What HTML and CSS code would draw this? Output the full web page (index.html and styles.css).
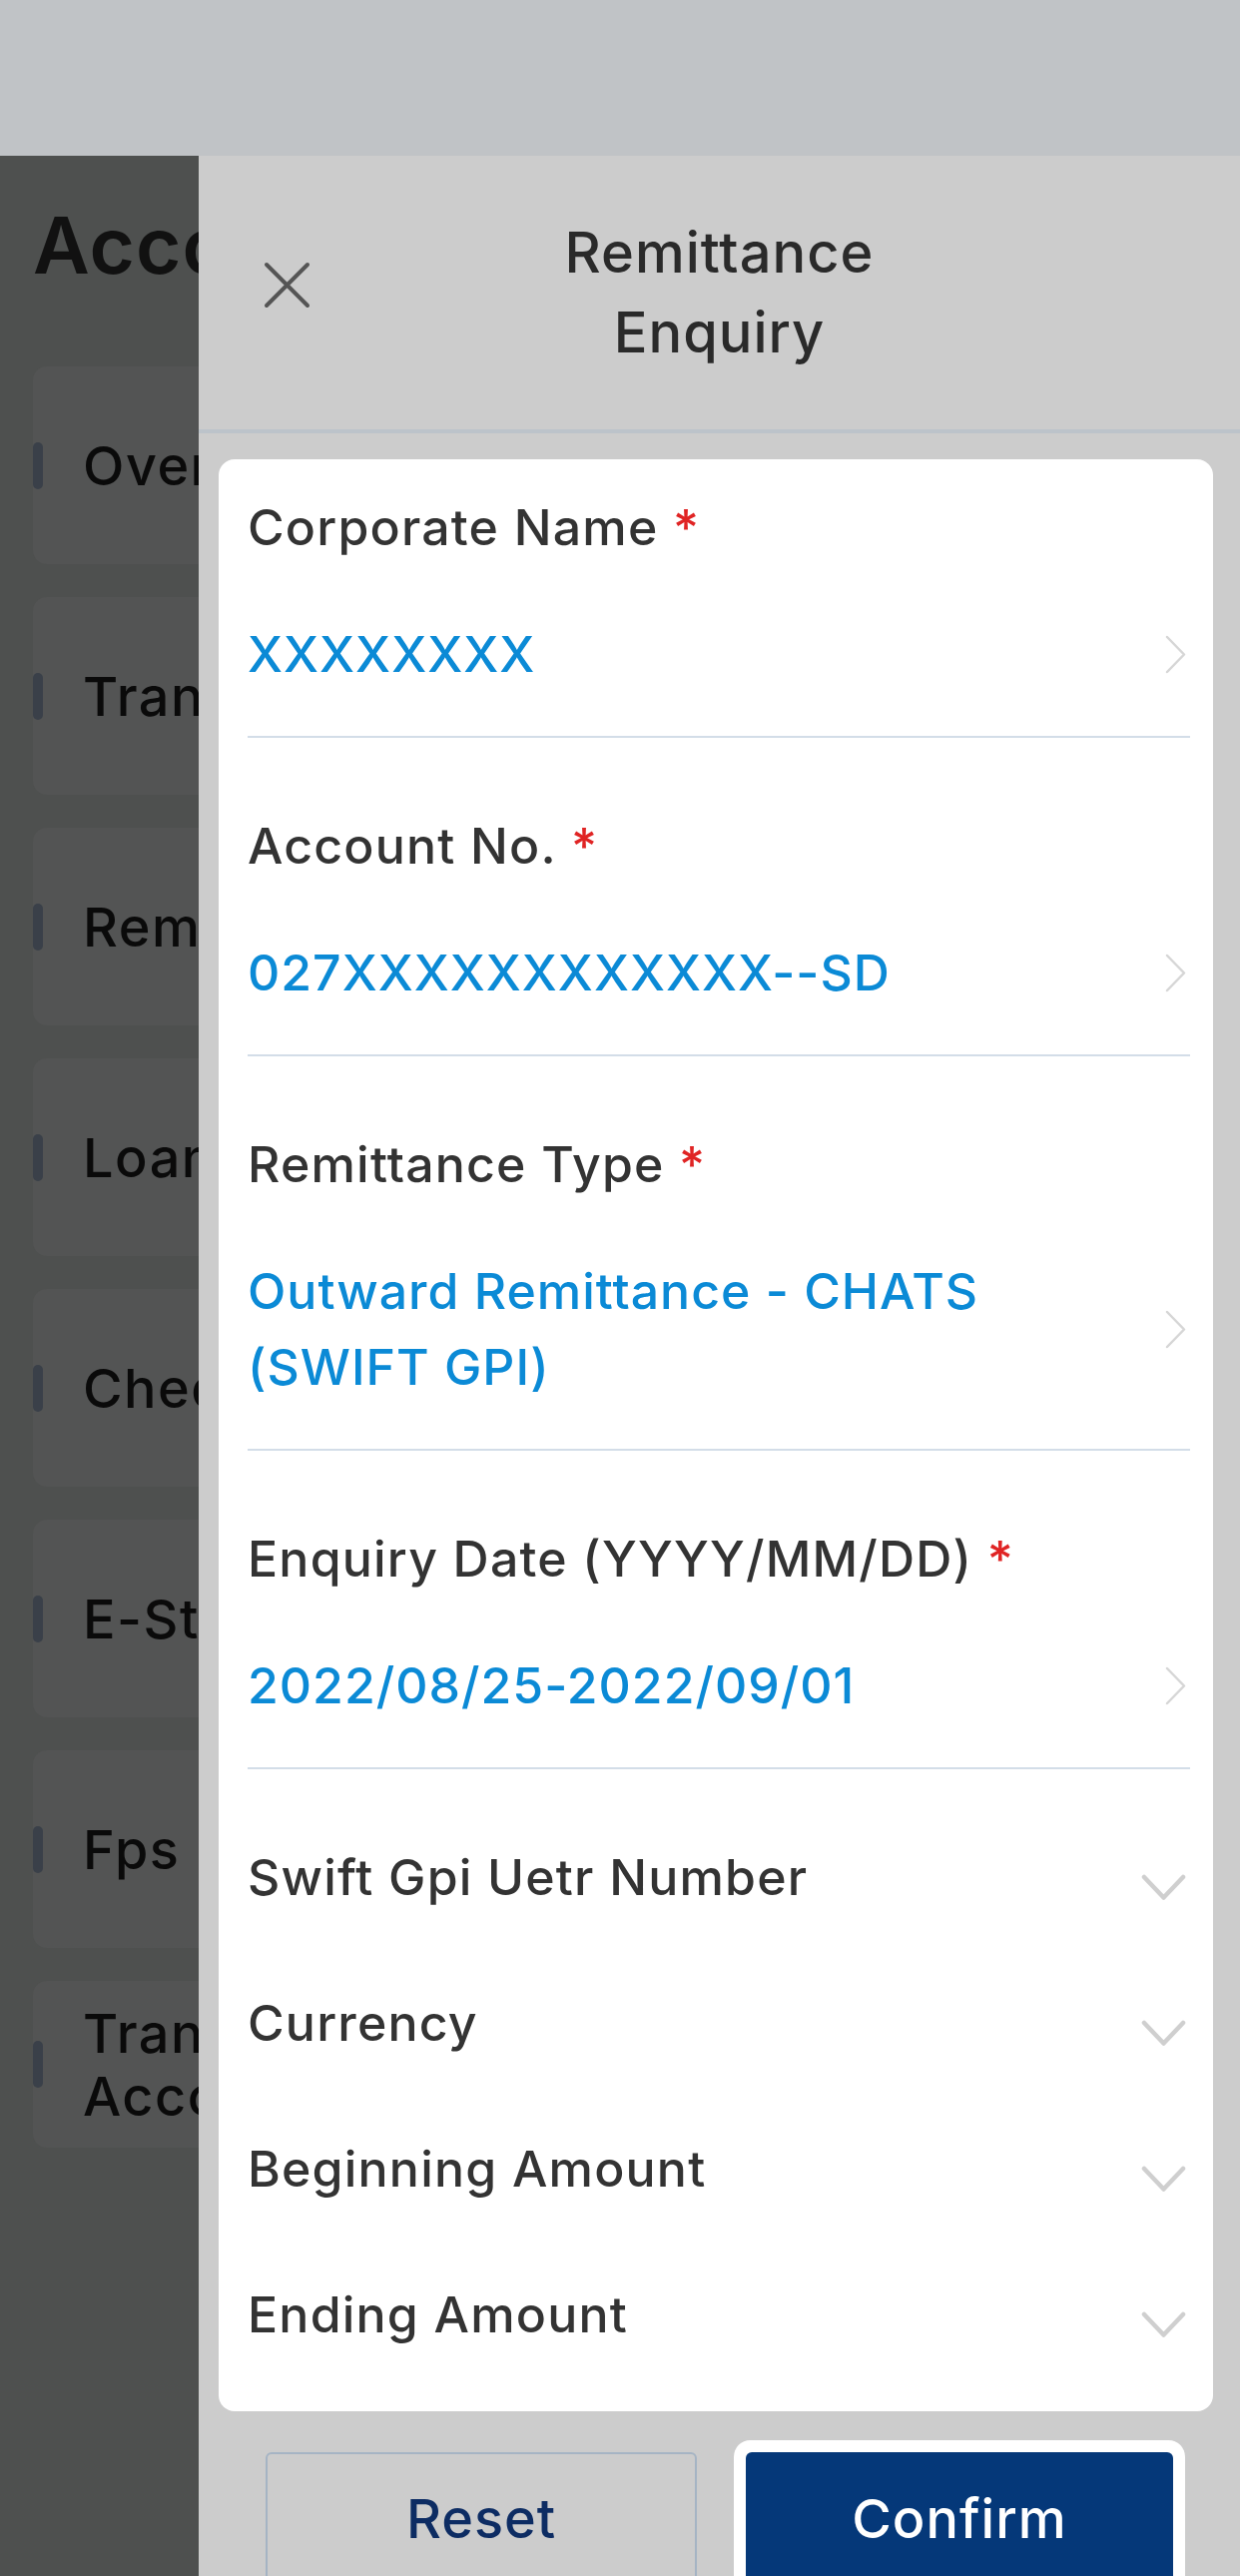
FILE: index.html
```html
<!DOCTYPE html>
<html lang="en">
<head>
<meta charset="utf-8">
<title>Remittance Enquiry</title>
<link rel="stylesheet" href="styles.css">
</head>
<body>
<div class="phone">
  <div class="statusbar"></div>
  <div class="main">
    <div class="backdrop">
      <h1 class="bd-title">Account Services</h1>
      <ul class="bd-list">
        <li class="bd-card"><span class="bd-bar"></span><span class="bd-text">Overview</span></li>
        <li class="bd-card"><span class="bd-bar"></span><span class="bd-text">Transaction Details</span></li>
        <li class="bd-card"><span class="bd-bar"></span><span class="bd-text">Remittance Enquiry</span></li>
        <li class="bd-card"><span class="bd-bar"></span><span class="bd-text">Loan Enquiry</span></li>
        <li class="bd-card"><span class="bd-bar"></span><span class="bd-text">Cheque Enquiry</span></li>
        <li class="bd-card"><span class="bd-bar"></span><span class="bd-text">E-Statement</span></li>
        <li class="bd-card"><span class="bd-bar"></span><span class="bd-text">Fps</span></li>
        <li class="bd-card bd-card-two"><span class="bd-bar"></span><span class="bd-text">Transfer Between<br>Accounts</span></li>
      </ul>
    </div>

    <section class="drawer">
      <header class="drawer-head">
        <button class="close" aria-label="Close">
          <svg width="47" height="47" viewBox="0 0 47 47"><path d="M3 3 L44 44 M44 3 L3 44" stroke="#555" stroke-width="4" fill="none" stroke-linecap="round"/></svg>
        </button>
        <h2 class="drawer-title">Remittance Enquiry</h2>
        <span class="head-spacer"></span>
      </header>

      <div class="form-card">
        <div class="field">
          <div class="label">Corporate Name <span class="req">*</span></div>
          <div class="value-row">
            <span class="value">XXXXXXXX</span>
            <svg class="chev-right" width="21" height="39" viewBox="0 0 21 39"><path d="M2 2 L19 19.5 L2 37" stroke="#d6d6d6" stroke-width="2.5" fill="none" stroke-linecap="round" stroke-linejoin="round"/></svg>
          </div>
        </div>
        <div class="field">
          <div class="label">Account No. <span class="req">*</span></div>
          <div class="value-row">
            <span class="value">027XXXXXXXXXXXX--SD</span>
            <svg class="chev-right" width="21" height="39" viewBox="0 0 21 39"><path d="M2 2 L19 19.5 L2 37" stroke="#d6d6d6" stroke-width="2.5" fill="none" stroke-linecap="round" stroke-linejoin="round"/></svg>
          </div>
        </div>
        <div class="field">
          <div class="label">Remittance Type <span class="req">*</span></div>
          <div class="value-row">
            <span class="value">Outward Remittance - CHATS (SWIFT GPI)</span>
            <svg class="chev-right" width="21" height="39" viewBox="0 0 21 39"><path d="M2 2 L19 19.5 L2 37" stroke="#d6d6d6" stroke-width="2.5" fill="none" stroke-linecap="round" stroke-linejoin="round"/></svg>
          </div>
        </div>
        <div class="field">
          <div class="label">Enquiry Date (YYYY/MM/DD) <span class="req">*</span></div>
          <div class="value-row">
            <span class="value">2022/08/25-2022/09/01</span>
            <svg class="chev-right" width="21" height="39" viewBox="0 0 21 39"><path d="M2 2 L19 19.5 L2 37" stroke="#d6d6d6" stroke-width="2.5" fill="none" stroke-linecap="round" stroke-linejoin="round"/></svg>
          </div>
        </div>

        <div class="opt">
          <span class="label">Swift Gpi Uetr Number</span>
          <svg class="chev-down" width="45" height="27" viewBox="0 0 45 27"><path d="M3 3 L22.5 23.5 L42 3" stroke="#cfcfcf" stroke-width="4.5" fill="none" stroke-linecap="round" stroke-linejoin="round"/></svg>
        </div>
        <div class="opt">
          <span class="label">Currency</span>
          <svg class="chev-down" width="45" height="27" viewBox="0 0 45 27"><path d="M3 3 L22.5 23.5 L42 3" stroke="#cfcfcf" stroke-width="4.5" fill="none" stroke-linecap="round" stroke-linejoin="round"/></svg>
        </div>
        <div class="opt">
          <span class="label">Beginning Amount</span>
          <svg class="chev-down" width="45" height="27" viewBox="0 0 45 27"><path d="M3 3 L22.5 23.5 L42 3" stroke="#cfcfcf" stroke-width="4.5" fill="none" stroke-linecap="round" stroke-linejoin="round"/></svg>
        </div>
        <div class="opt">
          <span class="label">Ending Amount</span>
          <svg class="chev-down" width="45" height="27" viewBox="0 0 45 27"><path d="M3 3 L22.5 23.5 L42 3" stroke="#cfcfcf" stroke-width="4.5" fill="none" stroke-linecap="round" stroke-linejoin="round"/></svg>
        </div>
      </div>

      <div class="actions">
        <button class="btn btn-reset">Reset</button>
        <button class="btn btn-confirm">Confirm</button>
      </div>
    </section>
  </div>
</div>
</body>
</html>
```

FILE: styles.css
```css
* { box-sizing: border-box; }

html, body {
  margin: 0;
  padding: 0;
}

body {
  width: 1242px;
  height: 2580px;
  overflow: hidden;
  font-family: Inter, "Liberation Sans", "Noto Sans", Arial, sans-serif;
  background: #cccccc;
}

.phone {
  width: 1242px;
  height: 2580px;
  display: flex;
  flex-direction: column;
}

.statusbar {
  height: 156px;
  flex: none;
  background: #c0c3c6;
}

.main {
  flex: 1;
  display: flex;
  min-height: 0;
}

/* ---------- dimmed page behind the drawer ---------- */
.backdrop {
  width: 199px;
  flex: none;
  overflow: hidden;
  background: #4e504f;
}

.bd-title {
  margin: 45px 0 0 33px;
  width: 166px;
  overflow: hidden;
  font-size: 78px;
  line-height: 90px;
  font-weight: 600;
  color: #111111;
  white-space: nowrap;
  letter-spacing: 1px;
}

.bd-list {
  list-style: none;
  margin: 76px 0 0 33px;
  padding: 0;
  width: 1176px;
  display: flex;
  flex-direction: column;
  gap: 33px;
}

.bd-card {
  height: 198px;
  border-radius: 14px;
  background: #535454;
  display: flex;
  align-items: center;
}

.bd-card-two {
  height: 167px;
}

.bd-bar {
  width: 10px;
  height: 47px;
  border-radius: 5px;
  background: #3a4049;
  flex: none;
}

.bd-text {
  margin-left: 40px;
  width: 116px;
  overflow: hidden;
  font-size: 54px;
  line-height: 63px;
  font-weight: 500;
  color: #0a0a0a;
  letter-spacing: 1.5px;
  white-space: nowrap;
}

/* ---------- drawer ---------- */
.drawer {
  flex: 1;
  background: #cccccc;
  display: flex;
  flex-direction: column;
  overflow: hidden;
}

.drawer-head {
  height: 278px;
  flex: none;
  border-bottom: 4px solid #bcc3ca;
  display: grid;
  grid-template-columns: 1fr 420px 1fr;
  align-items: center;
}

.close {
  justify-self: start;
  margin: 0 0 16px 65px;
  padding: 0;
  border: 0;
  background: none;
  width: 47px;
  height: 47px;
  display: block;
}

.close svg { display: block; }

.drawer-title {
  margin: 0;
  font-size: 56px;
  line-height: 80px;
  font-weight: 500;
  color: #2a2a2a;
  text-align: center;
  letter-spacing: 1px;
}

.form-card {
  margin: 26px 27px 0 20px;
  padding: 0 23px 59px 29px;
  background: #ffffff;
  border-radius: 16px;
  flex: none;
}

.field {
  padding: 70px 0 44px;
  border-bottom: 2px solid #d3dde8;
}

.field:first-child {
  padding-top: 30px;
}

.label {
  font-size: 50px;
  line-height: 76px;
  font-weight: 500;
  color: #333333;
  letter-spacing: 1.2px;
}

.req {
  color: #e02424;
}

.value-row {
  margin-top: 51px;
  display: flex;
  align-items: center;
  gap: 40px;
}

.value {
  flex: 1;
  font-size: 50px;
  line-height: 76px;
  font-weight: 500;
  color: #0b8ad6;
  letter-spacing: 1px;
}

.chev-right {
  flex: none;
  display: block;
  margin-right: 4px;
}

.opt {
  padding-top: 70px;
  display: flex;
  align-items: center;
  justify-content: space-between;
}

.chev-down {
  flex: none;
  display: block;
  margin: 20px 4px 0 0;
}

/* ---------- actions ---------- */
.actions {
  padding: 41px 67px 0;
  display: flex;
  gap: 49px;
  flex: none;
}

.btn {
  flex: 1;
  height: 132px;
  border-radius: 6px;
  font-family: Inter, "Liberation Sans", "Noto Sans", Arial, sans-serif;
  font-size: 54px;
  font-weight: 500;
  letter-spacing: 1px;
  padding: 0;
  cursor: pointer;
}

.btn-reset {
  background: transparent;
  border: 2px solid #a5b4c4;
  color: #0d2c63;
}

.btn-confirm {
  background: #053879;
  border: 0;
  color: #ffffff;
  box-shadow: 0 0 0 12px #ffffff;
}
```
